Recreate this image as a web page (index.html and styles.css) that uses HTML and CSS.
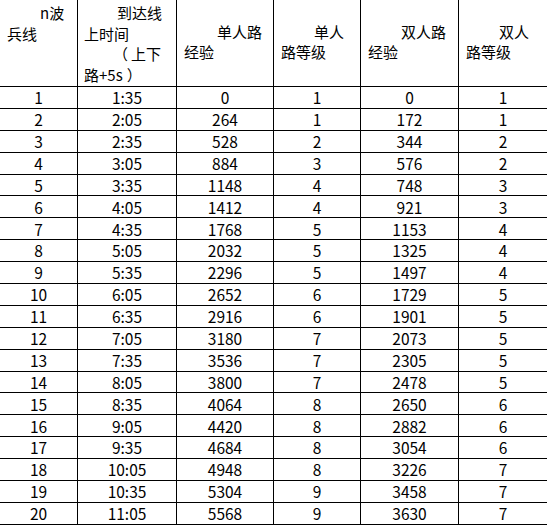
FILE: index.html
```html
<!DOCTYPE html>
<html lang="zh">
<head>
<meta charset="utf-8">
<link rel="stylesheet" href="styles.css">
</head>
<body>
<div class="sheet" id="sheet">
  <div class="cell head top c1"><div class="l i1">n波</div><div class="l">兵线</div></div>
  <div class="cell head top c2"><div class="l i2">到达线</div><div class="l">上时间</div><div class="l i3"><span class="pl">（</span>上下</div><div class="l">路+5s<span class="pr">）</span></div></div>
  <div class="cell head mid c3"><div class="l i4">单人路</div><div class="l">经验</div></div>
  <div class="cell head mid c4"><div class="l i4">单人</div><div class="l">路等级</div></div>
  <div class="cell head mid c5"><div class="l i4">双人路</div><div class="l">经验</div></div>
  <div class="cell head mid c6 last"><div class="l i4">双人</div><div class="l">路等级</div></div>
</div>
<script src="app.js"></script>
</body>
</html>
```
FILE: app.js
```js
var rows = [
  [1,"1:35",0,1,0,1],[2,"2:05",264,1,172,1],[3,"2:35",528,2,344,2],[4,"3:05",884,3,576,2],
  [5,"3:35",1148,4,748,3],[6,"4:05",1412,4,921,3],[7,"4:35",1768,5,1153,4],[8,"5:05",2032,5,1325,4],
  [9,"5:35",2296,5,1497,4],[10,"6:05",2652,6,1729,5],[11,"6:35",2916,6,1901,5],[12,"7:05",3180,7,2073,5],
  [13,"7:35",3536,7,2305,5],[14,"8:05",3800,7,2478,5],[15,"8:35",4064,8,2650,6],[16,"9:05",4420,8,2882,6],
  [17,"9:35",4684,8,3054,6],[18,"10:05",4948,8,3226,7],[19,"10:35",5304,9,3458,7],[20,"11:05",5568,9,3630,7]
];
var sheet = document.getElementById("sheet");
rows.forEach(function (r) {
  r.forEach(function (v, i) {
    var d = document.createElement("div");
    d.className = "cell data" + (i === 5 ? " last" : "");
    d.textContent = v;
    sheet.appendChild(d);
  });
});
```
FILE: styles.css
```css
html, body {
  margin: 0;
  padding: 0;
  background: #fff;
}
body {
  width: 547px;
  height: 525px;
  overflow: hidden;
  font-family: "Noto Sans CJK SC", "Noto Sans", sans-serif;
  font-size: 15px;
  color: #000;
}
.sheet {
  display: grid;
  grid-template-columns: 78px 99px 97px 87px 98px 88px;
  grid-template-rows: 87px repeat(20, 21.9px);
}
.cell {
  box-sizing: border-box;
  border-right: 1px solid #000;
  border-bottom: 1px solid #000;
  overflow: hidden;
  white-space: nowrap;
}
.cell.last {
  border-right: none;
}
.head {
  display: flex;
  flex-direction: column;
  padding-left: 7px;
  line-height: 20.5px;
}
.head.top {
  justify-content: flex-start;
  padding-top: 3px;
}
.head.mid {
  justify-content: center;
  padding-bottom: 2px;
}
.c2 { padding-left: 6px; }
.l.i1 { padding-left: 33px; }
.l.i2 { padding-left: 33px; }
.l.i3 { padding-left: 29px; }
.l.i4 { padding-left: 33px; }
.pl {
  display: inline-block;
  width: 15px;
  text-align: right;
  margin-right: 3px;
}
.pr {
  display: inline-block;
  width: 15px;
  margin-left: 4px;
}
.data {
  display: flex;
  align-items: center;
  justify-content: center;
  line-height: 1;
  padding-top: 1px;
  font-size: 15.5px;
}
```
